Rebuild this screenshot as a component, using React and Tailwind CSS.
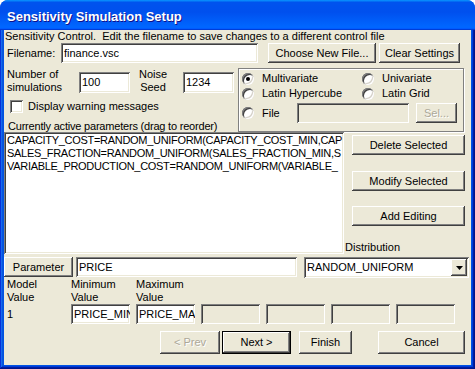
import clsx from "clsx";

const sunken =
  "shadow-[inset_1px_1px_#808080,inset_-1px_-1px_#ffffff,inset_2px_2px_#404040,inset_-2px_-2px_#ece9d8]";
const raised =
  "shadow-[inset_-1px_-1px_#404040,inset_1px_1px_#ffffff,inset_-2px_-2px_#808080,inset_2px_2px_#ece9d8]";
const greyed = "text-[#aca899] [text-shadow:1px_1px_#ffffff]";

function Button({ className, disabled, children }) {
  return (
    <div
      className={clsx(
        "flex items-center justify-center bg-[#ece9d8] shrink-0",
        raised,
        disabled && greyed,
        className
      )}
    >
      {children}
    </div>
  );
}

function Field({ className, disabled, children }) {
  return (
    <div
      className={clsx(
        "flex items-center pl-[3px] overflow-hidden whitespace-nowrap shrink-0",
        sunken,
        disabled ? "bg-[#ece9d8]" : "bg-white",
        className
      )}
    >
      {children}
    </div>
  );
}

function Radio({ checked }) {
  return (
    <div className="flex h-[12px] w-[12px] shrink-0 items-center justify-center rounded-full bg-white shadow-[inset_1px_1px_#808080,inset_-1px_-1px_#ffffff,inset_2px_2px_#404040,inset_-2px_-2px_#d4d0c8]">
      {checked && <div className="h-[4px] w-[4px] rounded-full bg-black" />}
    </div>
  );
}

// text as far as the list box shows it
const params = [
  "CAPACITY_COST=RANDOM_UNIFORM(CAPACITY_COST_MIN,CAP",
  "SALES_FRACTION=RANDOM_UNIFORM(SALES_FRACTION_MIN,S",
  "VARIABLE_PRODUCTION_COST=RANDOM_UNIFORM(VARIABLE_",
];

export default function App() {
  return (
    <div className="flex h-[369px] w-[475px] flex-col overflow-hidden rounded-t-[8px] bg-[#0054e3] font-['Liberation_Sans',Arial,sans-serif] text-[11px] leading-[13px] text-black">
      {/* Title bar */}
      <div className="flex h-[30px] shrink-0 items-center bg-[linear-gradient(180deg,#0997ff,#0053ee_8%,#0050ee_40%,#0066ff_88%,#0066ff_93%,#005bff_95%,#003dd7_96%,#003dd7)] pl-[7px] pt-[3px]">
        <span className="text-[13px] font-bold leading-[15px] text-white [text-shadow:1px_1px_#0f1089]">
          Sensitivity Simulation Setup
        </span>
      </div>

      {/* Frame */}
      <div className="flex flex-1 px-[4px] pb-[4px] shadow-[inset_-1px_-1px_#00138c,inset_1px_0_#0831d9,inset_-2px_-2px_#001ea0,inset_2px_0_#166aee,inset_-3px_-3px_#003bda,inset_3px_0_#0855dd]">
        <div className="flex flex-1 flex-col bg-[#ece9d8]">
          <div className="h-[13px] whitespace-pre pl-[1px]">
            Sensitivity Control.  Edit the filename to save changes to a different control file
          </div>

          {/* Filename row */}
          <div className="flex h-[20px] items-center">
            <div className="w-[57px] pl-[3px]">Filename:</div>
            <Field className="h-[20px] w-[197px]">finance.vsc</Field>
            <Button className="ml-[10px] h-[20px] w-[108px]">Choose New File...</Button>
            <Button className="ml-[3px] h-[20px] w-[81px]">Clear Settings</Button>
          </div>

          {/* Options row */}
          <div className="mt-[5px] flex h-[64px]">
            <div className="flex w-[234px] flex-col">
              <div className="flex h-[26px]">
                <div className="w-[75px] pl-[3px]">
                  Number of
                  <br />
                  simulations
                </div>
                <Field className="mt-[4px] h-[21px] w-[51px]">100</Field>
                <div className="ml-[8px] w-[30px] text-center">
                  Noise
                  <br />
                  Seed
                </div>
                <Field className="ml-[15px] mt-[4px] h-[21px] w-[51px]">1234</Field>
              </div>
              <div className="mt-[6px] flex h-[13px] items-center">
                <div className={clsx("ml-[6px] h-[13px] w-[13px] bg-white", sunken)} />
                <span className="ml-[5px]">Display warning messages</span>
              </div>
              <div className="mt-[7px] pl-[4px] tracking-[-0.2px]">
                Currently active parameters (drag to reorder)
              </div>
            </div>

            <div className="flex w-[226px] flex-col border border-[#808080] pl-[3px] pt-[3px] shadow-[inset_1px_1px_#ffffff,1px_1px_#ffffff]">
              <div className="flex h-[13px] items-center">
                <div className="flex w-[120px] items-center">
                  <Radio checked />
                  <span className="ml-[8px]">Multivariate</span>
                </div>
                <Radio />
                <span className="ml-[8px]">Univariate</span>
              </div>
              <div className="mt-[2px] flex h-[13px] items-center">
                <div className="flex w-[120px] items-center">
                  <Radio />
                  <span className="ml-[8px]">Latin Hypercube</span>
                </div>
                <Radio />
                <span className="ml-[8px]">Latin Grid</span>
              </div>
              <div className="mt-[3px] flex h-[20px] items-center">
                <Radio />
                <span className="ml-[8px] w-[35px]">File</span>
                <Field disabled className="h-[20px] w-[112px]" />
                <Button disabled className="ml-[7px] h-[20px] w-[41px]">
                  Sel...
                </Button>
              </div>
            </div>
          </div>

          {/* Parameter list + actions */}
          <div className="flex h-[125px]">
            <div className={clsx("h-[122px] w-[340px] overflow-hidden bg-white pl-[3px] pt-[2px] tracking-[-0.3px]", sunken)}>
              {params.map((p) => (
                <div key={p} className="overflow-hidden whitespace-nowrap">
                  {p}
                </div>
              ))}
            </div>
            <div className="flex flex-col pl-[1px]">
              <Button className="ml-[7px] mt-[3px] h-[20px] w-[113px]">Delete Selected</Button>
              <Button className="ml-[7px] mt-[16px] h-[20px] w-[113px]">Modify Selected</Button>
              <Button className="ml-[7px] mt-[15px] h-[20px] w-[113px]">Add Editing</Button>
              <div className="mt-[15px]">Distribution</div>
            </div>
          </div>

          {/* Parameter row */}
          <div className="flex h-[21px]">
            <Button className="h-[20px] w-[69px]">Parameter</Button>
            <Field className="ml-[3px] h-[20px] w-[221px]">PRICE</Field>
            <Field className="ml-[7px] h-[21px] w-[165px] pr-[2px]">
              <span>RANDOM_UNIFORM</span>
              <div className={clsx("ml-auto flex h-[17px] w-[16px] items-center justify-center bg-[#ece9d8]", raised)}>
                <svg width="7" height="4" viewBox="0 0 7 4">
                  <path d="M0 0h7L3.5 4z" fill="#000" />
                </svg>
              </div>
            </Field>
          </div>

          {/* Value labels */}
          <div className="flex h-[26px]">
            <div className="w-[67px] pl-[3px]">
              Model
              <br />
              Value
            </div>
            <div className="w-[65px]">
              Minimum
              <br />
              Value
            </div>
            <div>
              Maximum
              <br />
              Value
            </div>
          </div>

          {/* Values */}
          <div className="flex h-[20px] items-center">
            <div className="w-[67px] pl-[3px]">1</div>
            <div className="flex gap-[6px]">
              <Field className="h-[20px] w-[59px]">PRICE_MIN</Field>
              <Field className="h-[20px] w-[59px]">PRICE_MAX</Field>
              <Field disabled className="h-[20px] w-[59px]" />
              <Field disabled className="h-[20px] w-[59px]" />
              <Field disabled className="h-[20px] w-[59px]" />
              <Field disabled className="h-[20px] w-[59px]" />
            </div>
          </div>

          {/* Wizard buttons */}
          <div className="mt-[7px] flex h-[23px]">
            <Button disabled className="ml-[156px] h-[23px] w-[60px]">
              &lt; Prev
            </Button>
            <div className="ml-[2px] h-[23px] w-[69px] border border-black">
              <div className={clsx("flex h-full items-center justify-center", raised)}>Next &gt;</div>
            </div>
            <Button className="ml-[8px] h-[23px] w-[53px]">Finish</Button>
            <Button className="ml-[26px] h-[23px] w-[87px]">Cancel</Button>
          </div>
        </div>
      </div>
    </div>
  );
}
